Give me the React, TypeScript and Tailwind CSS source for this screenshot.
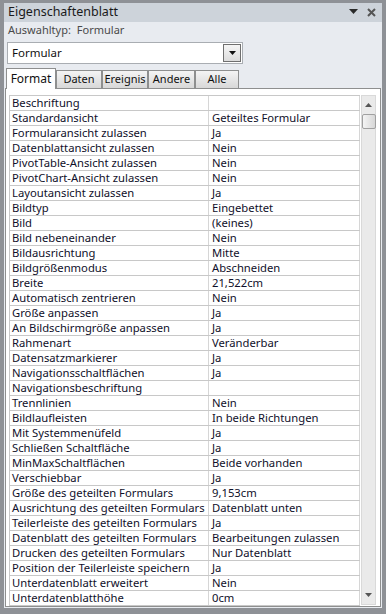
import React from "react";

const rows: [string, string][] = [
  ["Beschriftung", ""],
  ["Standardansicht", "Geteiltes Formular"],
  ["Formularansicht zulassen", "Ja"],
  ["Datenblattansicht zulassen", "Nein"],
  ["PivotTable-Ansicht zulassen", "Nein"],
  ["PivotChart-Ansicht zulassen", "Nein"],
  ["Layoutansicht zulassen", "Ja"],
  ["Bildtyp", "Eingebettet"],
  ["Bild", "(keines)"],
  ["Bild nebeneinander", "Nein"],
  ["Bildausrichtung", "Mitte"],
  ["Bildgrößenmodus", "Abschneiden"],
  ["Breite", "21,522cm"],
  ["Automatisch zentrieren", "Nein"],
  ["Größe anpassen", "Ja"],
  ["An Bildschirmgröße anpassen", "Ja"],
  ["Rahmenart", "Veränderbar"],
  ["Datensatzmarkierer", "Ja"],
  ["Navigationsschaltflächen", "Ja"],
  ["Navigationsbeschriftung", ""],
  ["Trennlinien", "Nein"],
  ["Bildlaufleisten", "In beide Richtungen"],
  ["Mit Systemmenüfeld", "Ja"],
  ["Schließen Schaltfläche", "Ja"],
  ["MinMaxSchaltflächen", "Beide vorhanden"],
  ["Verschiebbar", "Ja"],
  ["Größe des geteilten Formulars", "9,153cm"],
  ["Ausrichtung des geteilten Formulars", "Datenblatt unten"],
  ["Teilerleiste des geteilten Formulars", "Ja"],
  ["Datenblatt des geteilten Formulars", "Bearbeitungen zulassen"],
  ["Drucken des geteilten Formulars", "Nur Datenblatt"],
  ["Position der Teilerleiste speichern", "Ja"],
  ["Unterdatenblatt erweitert", "Nein"],
  ["Unterdatenblatthöhe", "0cm"],
];

const font = { fontFamily: '"Segoe UI", "Noto Sans", "Open Sans", sans-serif' };

function Tab({ label, selected, w }: { label: string; selected?: boolean; w: string }) {
  if (selected) {
    return (
      <div
        className={`${w} h-[21px] -mb-px relative z-10 bg-white border border-[#8e8f8f] border-b-0 flex items-center justify-center text-[12px] text-[#111]`}
      >
        {label}
      </div>
    );
  }
  return (
    <div
      className={`${w} h-[18px] bg-gradient-to-b from-[#f4f4f4] to-[#d8d8d8] border border-[#8e8f8f] border-b-0 flex items-center justify-center text-[11px] text-[#111]`}
    >
      {label}
    </div>
  );
}

export default function App() {
  return (
    <div className="w-[386px] h-[614px] bg-[#8e9196] pt-[3px] px-[4px] pb-[6px]" style={font}>
      <div className="h-full bg-[#e8ebf0] flex flex-col">
        <div className="h-[19px] bg-[#cdd3da] flex items-center pl-[4px] pr-[6px]">
          <span className="text-[12.5px] text-[#1a1a1a] leading-none">Eigenschaftenblatt</span>
          <div className="flex-1" />
          <svg width="9" height="6" viewBox="0 0 9 6" className="mr-[9px]">
            <path d="M0 0 H9 L4.5 5 Z" fill="#2a2a2a" />
          </svg>
          <svg width="9" height="9" viewBox="0 0 9 9">
            <path d="M1 1 L8 8 M8 1 L1 8" stroke="#555" strokeWidth="2" />
          </svg>
        </div>
        <div className="h-[18px] flex items-center pl-[4px] text-[11px] text-[#4a4a4a]">
          <span>Auswahltyp:</span>
          <span className="ml-[6px]">Formular</span>
        </div>
        <div className="mt-[3px] ml-[3px] w-[236px] h-[22px] bg-white border border-[#a9adb2] flex items-center pl-[4px] pr-[1px]">
          <span className="flex-1 text-[11.5px] text-[#111]">Formular</span>
          <div className="w-[18px] h-[18px] border border-[#6f6f6f] bg-gradient-to-b from-[#f5f5f5] to-[#dcdcdc] flex items-center justify-center">
            <svg width="7" height="4" viewBox="0 0 7 4">
              <path d="M0 0 H7 L3.5 4 Z" fill="#111" />
            </svg>
          </div>
        </div>
        <div className="mt-[4px] ml-[2px] flex items-end h-[21px]">
          <Tab label="Format" selected w="w-[50px]" />
          <Tab label="Daten" w="w-[46px]" />
          <Tab label="Ereignis" w="w-[46px]" />
          <Tab label="Andere" w="w-[47px]" />
          <Tab label="Alle" w="w-[44px]" />
        </div>
        <div className="flex-1 mx-[1px] mb-[1px] bg-white border border-[#8e8f8f] pt-[6px] pl-[3px] pr-[1px] flex">
          <div className="w-[351px] border-t border-l border-[#c8c8c8] text-[11.25px] text-[#10102a]">
            {rows.map(([k, v], i) => (
              <div key={i} className="h-[15px] flex border-b border-[#c8c8c8]">
                <div className="w-[199px] border-r border-[#d6d6d6] pl-[2px] leading-[14px] whitespace-nowrap">
                  {k}
                </div>
                <div className="flex-1 border-r border-[#d6d6d6] pl-[3px] leading-[14px] whitespace-nowrap">
                  {v}
                </div>
              </div>
            ))}
          </div>
          <div className="ml-[1px] w-[15px] h-[510px] bg-[#eaeaea] border border-[#d9d9d9] flex flex-col items-center">
            <div className="h-[18px] flex items-center justify-center">
              <svg width="7" height="4" viewBox="0 0 7 4">
                <path d="M3.5 0 L7 4 H0 Z" fill="#555" />
              </svg>
            </div>
            <div className="w-[14px] h-[15px] border border-[#a0a0a0] rounded-[2px] bg-gradient-to-r from-[#f4f4f4] to-[#d7d7d7]" />
            <div className="flex-1" />
            <div className="h-[18px] flex items-center justify-center">
              <svg width="7" height="4" viewBox="0 0 7 4">
                <path d="M0 0 H7 L3.5 4 Z" fill="#555" />
              </svg>
            </div>
          </div>
        </div>
      </div>
    </div>
  );
}
